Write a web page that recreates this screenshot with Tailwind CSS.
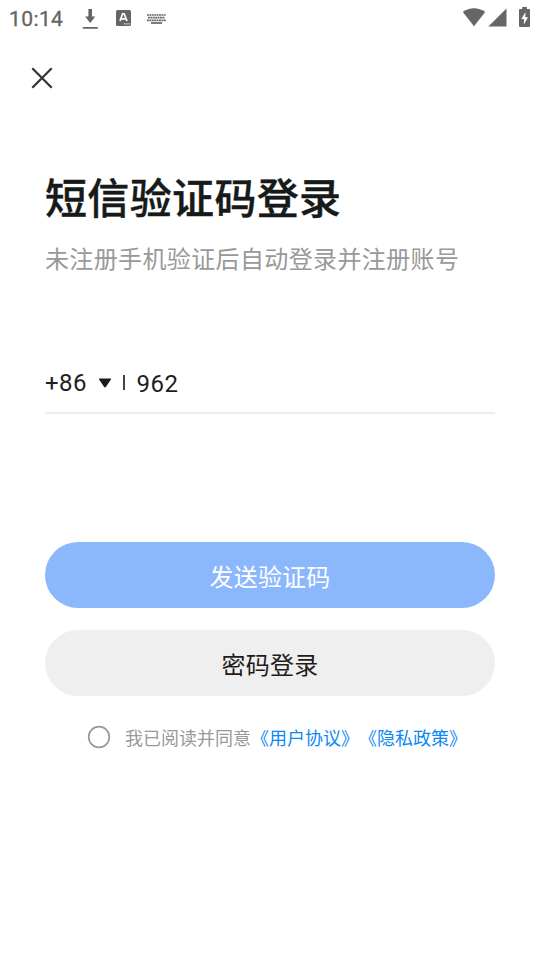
<!DOCTYPE html>
<html lang="zh-CN">
<head>
<meta charset="utf-8">
<meta name="viewport" content="width=device-width, initial-scale=1">
<title>短信验证码登录</title>
<script src="https://cdn.jsdelivr.net/npm/@tailwindcss/browser@4"></script>
</head>
<body class="bg-white">
<div class="w-[540px] h-[960px] overflow-hidden bg-white flex flex-col font-[Roboto,'Noto_Sans_CJK_SC',sans-serif] [text-spacing-trim:space-all]">
  <header class="h-9 shrink-0 flex items-center text-[#666]">
    <span class="ml-[9px] w-[73px] text-[21px] leading-9 tracking-[0.4px] pt-[2px] [-webkit-text-stroke:0.35px_#666]">10:14</span>
    <svg class="mt-[2px] w-4 h-5" viewBox="0 0 16 20" fill="currentColor"><path d="M6.400 0h3.600v7.500H13.300L8.200 14 3.100 7.500h3.300zM.8 18h15v1.800H.8z"/></svg>
    <svg class="ml-[18px] w-[15px] h-4" viewBox="0 0 15 16"><rect width="15" height="16" rx="1.500" fill="currentColor"/><path d="M4 11 6.600 3.800h1.600L11 11M5 8.800h5" fill="none" stroke="#fff" stroke-width="1.700"/><path d="M8 13.200h1.200v1.200H8zM10.300 13.200h1.200v1.200h-1.200zM12.600 13.200h1.200v1.200h-1.200z" fill="#fff"/></svg>
    <svg class="ml-4 mt-px w-[19px] h-[10px]" viewBox="0 0 19 10" fill="none" stroke="currentColor"><path d="M0 1h19M0 6.300h19" stroke-width="1.700" stroke-dasharray="1.900 .5"/><path d="M1 3.650h17" stroke-width="1.700" stroke-dasharray="1.900 .5"/><path d="M4 9h11" stroke-width="1.700"/></svg>
    <svg class="ml-auto mt-[-2px] w-6 h-[19px]" viewBox="0 0 24 19" fill="currentColor"><path d="M.8 4.100C7.500-.9 16.500-.9 23.200 4.100L12 18.300z"/></svg>
    <svg class="ml-[2px] mt-[-1px] w-[19px] h-[19px]" viewBox="0 0 19 19" fill="currentColor"><path d="M.4 18.500 18.500.4v18.100z"/></svg>
    <svg class="ml-[12px] mr-[10px] mt-[-2px] w-[11px] h-5" viewBox="0 0 11 20"><path d="M3.200 0h4.600v2H10q1 0 1 1v16q0 1-1 1H1q-1 0-1-1V3q0-1 1-1h2.200z" fill="currentColor"/><path d="M6.500 5 2.300 12h2.600v5.500L9 10.200H6.300z" fill="#fff"/></svg>
  </header>
  <button class="mt-[31px] ml-[31px] size-[22px] shrink-0" aria-label="关闭"><svg class="size-[22px]" viewBox="0 0 22 22" fill="none" stroke="#333" stroke-width="2.200"><path d="m1.300 1.300 19.400 19.400M20.700 1.300 1.300 20.700"/></svg></button>
  <main class="px-[45px] flex flex-col">
    <h1 class="mt-[81px] h-[60px] leading-[60px] text-[42px] font-medium tracking-[0.35px] text-[#161a19] [-webkit-text-stroke:0.4px_#161a19] whitespace-nowrap">短信验证码登录</h1>
    <p class="mt-[12px] h-9 leading-9 text-[24px] tracking-[0.37px] text-[#999] whitespace-nowrap">未注册手机验证后自动登录并注册账号</p>
    <div class="mt-[85px] h-[51px] flex items-start border-b-2 border-[#ededed] text-[24px] leading-[40px] text-[#1b1f1e]">
      <span class="w-[53px] tracking-[0.4px]">+86</span>
      <svg class="mt-[15px] w-[14px] h-[10px]" viewBox="0 0 14 10" fill="#1b1b1b"><path d="M1.500.5h11q1 0 .4.9L8 8.800q-1 1.200-2 0L1.100 1.400Q.5.500 1.500.500z"/></svg>
      <span class="ml-[11px] mt-3 w-[1.500px] h-[15px] bg-[#444]"></span>
      <span class="ml-3 mt-px tracking-[0.500px]">962</span>
    </div>
    <button class="mt-[128px] h-[66px] rounded-full bg-[#8bb7fc] text-white text-[24px] tracking-[0.2px] leading-9 pt-[5px]">发送验证码</button>
    <button class="mt-[22px] h-[66px] rounded-full bg-[#efefef] text-[#241a1a] text-[24px] tracking-[0.2px] leading-9 pt-[5px]">密码登录</button>
    <div class="mt-[25px] ml-[42px] flex items-center text-[18px] leading-9 whitespace-nowrap text-[#999]">
      <svg class="mt-[-4px] size-6" viewBox="0 0 24 24" fill="none" stroke="#999" stroke-width="1.700"><circle cx="12" cy="12" r="10.300"/></svg>
      <span class="ml-[14px]">我已阅读并同意</span><a class="text-[#0c88f5]">《用户协议》</a><a class="text-[#0c88f5]">《隐私政策》</a>
    </div>
  </main>
</div>
</body>
</html>
